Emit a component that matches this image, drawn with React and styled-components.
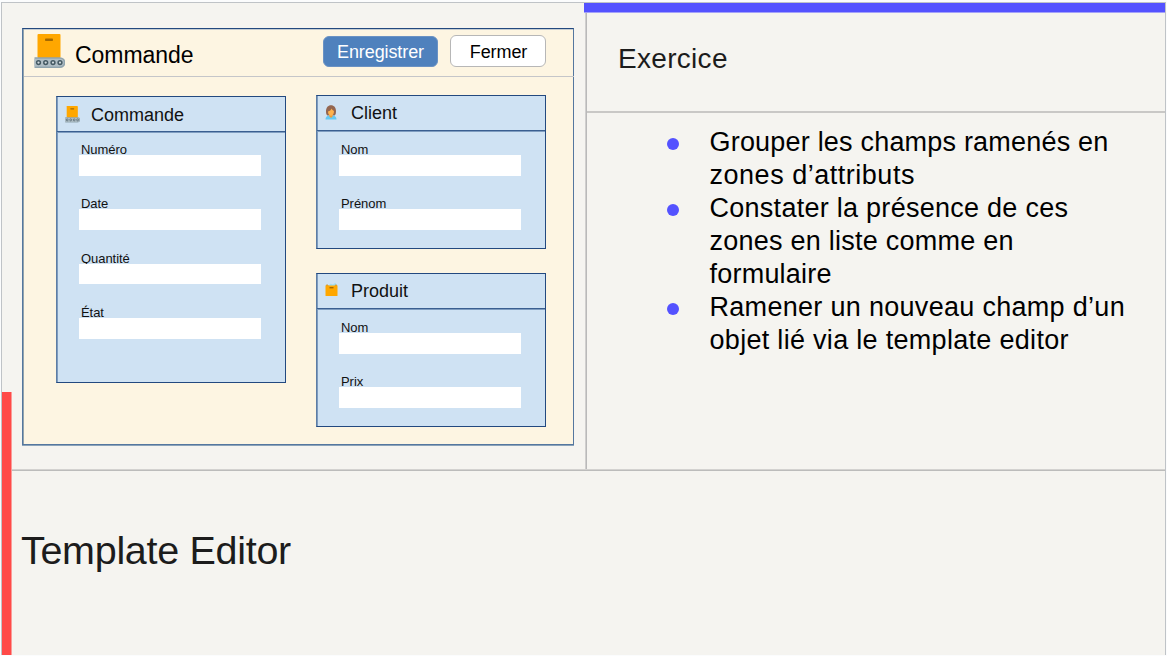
import React from "react";
import styled, { createGlobalStyle } from "styled-components";

const GlobalStyle = createGlobalStyle`
  * { box-sizing: border-box; }
  body {
    margin: 0;
    background: #fbfcfd;
    font-family: "Liberation Sans", Arial, sans-serif;
    overflow: hidden;
  }
  h1, h2, h3, ul { margin: 0; padding: 0; font-weight: 400; }
`;

const Page = styled.div`
  width: 1167px;
  height: 656px;
  padding: 2px 1px 1px 1px;
`;

const Slide = styled.main`
  display: flex;
  flex-direction: column;
  height: 653px;
  background: #f5f4f0;
  border: solid #bfc3c7;
  border-width: 1px 1px 0 1px;
`;

const Top = styled.div`
  display: flex;
  height: 466px;
`;

const FormPane = styled.section`
  width: 583px;
  padding: 25px 0 0 20px;
`;

const Window = styled.div`
  width: 552px;
  height: 417px;
  background: #fdf5e2;
  border: 1px solid #54779f;
  border-top-color: #23497f;
  box-shadow: inset 1px 0 #93a3ac, inset 0 1px #c6cdd2, 0 1px #8ba3b9;
`;

const WindowBar = styled.header`
  display: flex;
  height: 48px;
  width: 550px;
  margin-left: 1px;
  border-bottom: 1px solid #c5c6c9;
  padding-left: 10px;
`;

const WindowTitle = styled.h2`
  width: 248px;
  margin-left: 10px;
  padding-top: 12px;
  font-size: 23px;
  line-height: 28px;
  letter-spacing: -0.05px;
  color: #000;
`;

const Button = styled.button`
  width: ${(p) => (p.$primary ? 115 : 96)}px;
  height: ${(p) => (p.$primary ? 31 : 32)}px;
  margin: ${(p) => (p.$primary ? "7px 12px 0 0" : "6px 0 0")};
  padding: ${(p) => (p.$primary ? "1px 0 0" : "2px 0 0 1px")};
  border: 1px solid ${(p) => (p.$primary ? "#6a92c4" : "#b7b7b7")};
  border-radius: 6px;
  background: ${(p) => (p.$primary ? "#4f81bd" : "#fff")};
  color: ${(p) => (p.$primary ? "#fff" : "#000")};
  font: 18px/29px "Liberation Sans", Arial, sans-serif;
  letter-spacing: -0.1px;
`;

const Panels = styled.div`
  display: flex;
  align-items: flex-start;
  gap: 30px;
  padding: 18px 0 0 33px;
`;

const Column = styled.div`
  display: flex;
  flex-direction: column;
  gap: 24px;
`;

const PanelBox = styled.section`
  width: 230px;
  height: ${(p) => p.$height}px;
  margin-top: ${(p) => p.$offset || 0}px;
  background: #cfe2f3;
  border: 1px solid #23497f;
  border-left-color: #5d7da5;
  box-shadow: inset 1px 0 #7e9cbf;
`;

const PanelHead = styled.header`
  display: flex;
  height: 35px;
  padding-left: 8px;
  border-bottom: 1px solid #3a5f90;
  box-shadow: 0 1px #7f9dc0;
`;

const PanelTitle = styled.h3`
  margin-left: ${(p) => p.$gap}px;
  padding-top: ${(p) => p.$drop || 0}px;
  font-size: 18px;
  line-height: 34px;
  color: #111;
`;

const Fields = styled.div`
  display: flex;
  flex-direction: column;
  gap: 17.4px;
  padding: ${(p) => p.$top}px 0 0 22px;
`;

const Field = styled.label`
  display: flex;
  flex-direction: column;
  width: 182px;
  height: 37px;
`;

const Label = styled.span`
  height: 14px;
  padding-left: 2px;
  font-size: 13px;
  line-height: 17px;
  letter-spacing: -0.05px;
  color: #111;
`;

const Input = styled.span`
  height: 20.5px;
  background: #fff;
`;

const TextPane = styled.section`
  flex: 1;
  display: flex;
  flex-direction: column;
  border-left: 1px solid #d0cfce;
`;

const TextBody = styled.div`
  flex: 1;
  border-left: 1px solid #b9b9b9;
`;

const Accent = styled.div`
  height: 10px;
  margin-left: -2px;
  background: #5452ff;
  border-bottom: 1px solid #a3a1fa;
`;

const PaneHead = styled.header`
  height: 100px;
  padding: 29px 0 0 31px;
  border-bottom: 2px solid #c9c8c6;
`;

const PaneTitle = styled.h2`
  font-size: 28px;
  line-height: 34px;
  letter-spacing: 0.3px;
  color: #1c1c1c;
`;

const List = styled.ul`
  list-style: none;
  padding: 13px 0 0 80px;
`;

const Item = styled.li`
  display: flex;
  font-size: 27px;
  line-height: 33px;
  color: #000;
`;

const Bullet = styled.span`
  flex: none;
  width: 12px;
  height: 12px;
  margin: 11.5px 31px 0 -0.5px;
  border-radius: 50%;
  background: #5452ff;
`;

const Line = styled.span`
  display: block;
  white-space: nowrap;
  letter-spacing: ${(p) => p.$spacing}px;
`;

const Bottom = styled.footer`
  flex: 1;
  border-top: 1px solid #d3d2d0;
  box-shadow: inset 0 1px #bcbcbb;
  padding: 58px 0 0 19px;
`;

const MainTitle = styled.h1`
  font-size: 39.5px;
  line-height: 44px;
  letter-spacing: -0.3px;
  color: #1c1c1c;
`;

const RedBar = styled.div`
  position: absolute;
  left: 2px;
  top: 392px;
  width: 10px;
  height: 263px;
  background: #ff4a48;
  border-right: 1px solid #fb9b98;
`;

const Svg = styled.svg`
  flex: none;
  margin-top: ${(p) => p.$top}px;
`;

const ConveyorIcon = ({ width, height, top }) => (
  <Svg width={width} height={height} viewBox="0 0 31 35" $top={top} preserveAspectRatio="none">
    <rect x="3.5" y="0" width="23" height="24" rx="1" fill="#ffa700" />
    <rect x="11" y="4.5" width="8" height="2.6" rx="0.8" fill="#a56900" />
    <path d="M0.5 23.2H26a5.4 5.4 0 0 1 0 10.8H0.5z" fill="#90a4ae" />
    <path d="M0.5 24.8H26a3.8 3.8 0 0 1 0 7.6H0.5z" fill="#b0bec5" />
    {[4.5, 11.7, 19, 26].map((x) => (
      <circle key={x} cx={x} cy="28.6" r="1.9" fill="#cfd8dc" stroke="#455a64" strokeWidth="1.5" />
    ))}
  </Svg>
);

const PersonIcon = () => (
  <Svg width="12" height="15" viewBox="0 0 12 15" $top={9}>
    <path d="M1 6.5C1 2.5 3 .3 6 .3s5 2.200 5 6.200c0 2-.4 3.200-1.400 4H2.400C1.400 9.700 1 8.500 1 6.500z" fill="#946650" />
    <path d="M.5 14.500c0-2.800 1.800-4 4-4h3c2.200 0 4 1.200 4 4z" fill="#64c8f4" />
    <path d="M4.500 9.500h3v2L6 13l-1.500-1.500z" fill="#ef9b33" />
    <path d="M3 6.500C4.800 6 6 5 6.500 3.500 7 4.800 8 5.500 9 6c0 2.800-1.200 4.800-3 4.800S3 9 3 6.500z" fill="#ffb24d" />
  </Svg>
);

const BoxIcon = () => (
  <Svg width="13" height="15" viewBox="0 0 13 15" $top={8}>
    <path d="M3 4 5.500 1.800 8 2.500 10.500.8 11.500 4z" fill="#9fdcf2" />
    <path d="M.5 4 2 2l2 2zM9.500 4 11 2l1.500 2z" fill="#c99a45" />
    <rect x=".5" y="3.500" width="12" height="10.500" rx=".6" fill="#ffa700" />
    <rect x="4.500" y="5" width="4" height="1.400" fill="#a56900" />
  </Svg>
);

const Panel = ({ title, icon, gap, drop, height, offset, fieldsTop = 10, fields }) => (
  <PanelBox $height={height} $offset={offset}>
    <PanelHead>
      {icon}
      <PanelTitle $gap={gap} $drop={drop}>{title}</PanelTitle>
    </PanelHead>
    <Fields $top={fieldsTop}>
      {fields.map((name) => (
        <Field key={name}>
          <Label>{name}</Label>
          <Input />
        </Field>
      ))}
    </Fields>
  </PanelBox>
);

const items = [
  [["Grouper les champs ramenés en", 0.2], ["zones d’attributs", 0.52]],
  [["Constater la présence de ces", 0.27], ["zones en liste comme en", 0.24], ["formulaire", 0.22]],
  [["Ramener un nouveau champ d’un", 0.3], ["objet lié via le template editor", 0.3]],
];

export default function App() {
  return (
    <Page>
      <GlobalStyle />
      <Slide>
        <Top>
          <FormPane>
            <Window>
              <WindowBar>
                <ConveyorIcon width={31} height={35} top={5} />
                <WindowTitle>Commande</WindowTitle>
                <Button $primary>Enregistrer</Button>
                <Button>Fermer</Button>
              </WindowBar>
              <Panels>
                <Panel
                  title="Commande"
                  icon={<ConveyorIcon width={15} height={17} top={9} />}
                  gap={11}
                  drop={1}
                  height={287}
                  offset={1}
                  fieldsTop={9}
                  fields={["Numéro", "Date", "Quantité", "État"]}
                />
                <Column>
                  <Panel title="Client" icon={<PersonIcon />} gap={14} height={154} fields={["Nom", "Prénom"]} />
                  <Panel title="Produit" icon={<BoxIcon />} gap={13} height={154} fields={["Nom", "Prix"]} />
                </Column>
              </Panels>
            </Window>
          </FormPane>
          <TextPane>
            <Accent />
            <TextBody>
              <PaneHead>
                <PaneTitle>Exercice</PaneTitle>
              </PaneHead>
              <List>
                {items.map((lines) => (
                  <Item key={lines[0][0]}>
                    <Bullet />
                    <span>
                      {lines.map(([text, spacing]) => (
                        <Line key={text} $spacing={spacing}>{text}</Line>
                      ))}
                    </span>
                  </Item>
                ))}
              </List>
            </TextBody>
          </TextPane>
        </Top>
        <Bottom>
          <MainTitle>Template Editor</MainTitle>
        </Bottom>
      </Slide>
      <RedBar />
    </Page>
  );
}
